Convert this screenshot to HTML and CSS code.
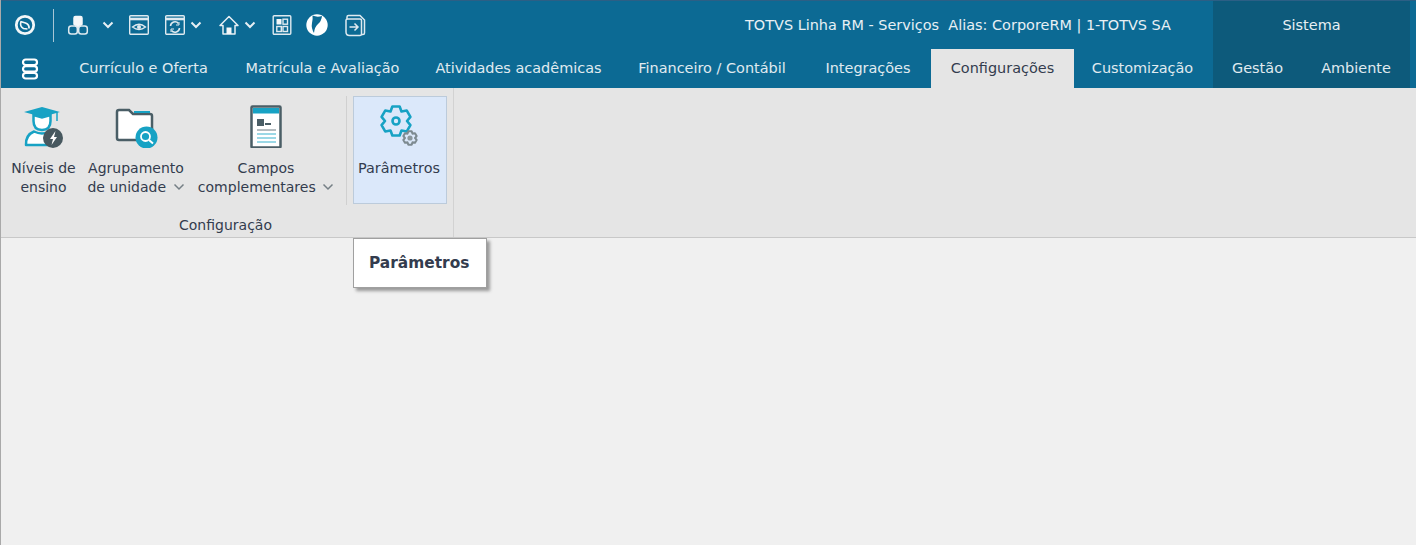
FILE: index.html
```html
<!DOCTYPE html>
<html lang="pt">
<head>
<meta charset="utf-8">
<title>TOTVS Linha RM</title>
<link rel="stylesheet" href="styles.css">
</head>
<body>
<div class="app">
  <header class="titlebar">
    <div class="quick">
      <svg class="qi" width="24" height="24" viewBox="0 0 24 24" fill="none" stroke="#f2f6f8"><circle cx="12" cy="12" r="8.700" stroke-width="2.800"/><path d="M7.500 8.500l5 1.500q4 1.500 3.500 5.500" stroke-width="1.800"/><path d="M8 8.500q-1.500 5 2.500 7l4 .5" stroke-width="1.600"/></svg>
      <span class="qsep"></span>
      <svg class="qi m12" width="24" height="24" viewBox="0 0 24 24" fill="none" stroke="#dfeaf0" stroke-width="1.500"><path d="M8 11V5q0-1.500 1.500-1.500h5Q16 3.500 16 5v6l-4 3z" fill="#f4f7f9" stroke="#f4f7f9"/><rect x="2.700" y="13" width="8.600" height="8" rx="2.500"/><rect x="12.700" y="13" width="8.600" height="8" rx="2.500"/></svg>
      <svg class="chev m12" width="12" height="8" viewBox="0 0 12 8" fill="none" stroke="#e6eff4" stroke-width="2"><path d="M1.500 1.500L6 6l4.500-4.500"/></svg>
      <svg class="qi m14" width="22" height="24" viewBox="0 0 22 24" fill="none" stroke="#dfeaf0" stroke-width="1.400"><rect x="1.700" y="2.700" width="18.600" height="18.600" rx="1"/><path d="M2 6h18" stroke-width="2.600"/><path d="M4.500 14q6.500-5.500 13 0q-6.500 5-13 0z"/><circle cx="11" cy="14" r="2" fill="#dfeaf0" stroke="none"/></svg>
      <svg class="qi m14" width="22" height="24" viewBox="0 0 22 24" fill="none" stroke="#dfeaf0" stroke-width="1.400"><rect x="1.700" y="2.700" width="18.600" height="18.600" rx="1"/><path d="M2 6h18" stroke-width="2.600"/><path d="M6.500 13a4.500 4.500 0 0 1 8-2.500M15.500 15a4.500 4.500 0 0 1-8 2.500" stroke-width="1.600"/><path d="M15 9v3h-3M7 19v-3h3" stroke-width="1"/></svg>
      <svg class="chev m4" width="12" height="8" viewBox="0 0 12 8" fill="none" stroke="#e6eff4" stroke-width="2"><path d="M1.500 1.500L6 6l4.500-4.500"/></svg>
      <svg class="qi m16" width="22" height="24" viewBox="0 0 22 24" fill="none" stroke="#e6eff4" stroke-width="1.500"><path d="M2 12.500l9-9 9 9h-3V21H5v-8.500z" stroke-linejoin="round"/><path d="M8.500 21v-6.500h5V21" fill="#f4f7f9" stroke="none"/></svg>
      <svg class="chev m4" width="12" height="8" viewBox="0 0 12 8" fill="none" stroke="#e6eff4" stroke-width="2"><path d="M1.500 1.500L6 6l4.500-4.500"/></svg>
      <svg class="qi m15" width="22" height="24" viewBox="0 0 22 24" fill="none" stroke="#dfeaf0" stroke-width="1.400"><rect x="2.200" y="2.700" width="17.600" height="18.600" rx="1"/><rect x="5.500" y="6" width="5" height="5.500" fill="#f4f7f9" stroke="none"/><rect x="12" y="6.200" width="4.500" height="5"/><rect x="5.800" y="13.500" width="4.500" height="5"/><rect x="12" y="13.500" width="4.500" height="5"/></svg>
      <svg class="qi m12" width="24" height="24" viewBox="0 0 24 24"><circle cx="12" cy="12" r="10.700" fill="#fff"/><path d="M7.500 2.500Q12 4.500 17 3Q16.500 8 13 11Q9.500 14 9 20Q6 15 7 10Q8 6 7.500 2.500z" fill="#0c6a94"/></svg>
      <svg class="qi m15" width="22" height="24" viewBox="0 0 22 24" fill="none" stroke="#dfeaf0" stroke-width="1.500"><path d="M3 6V4q0-1.500 1.500-1.500H16L20.500 7v13q0 1.500-1.500 1.500h-1" /><path d="M4 6h12q1.500 0 1.500 1.500V21q0 1.500-1.500 1.500H5.500Q2 22.500 2 19V7q0-1 2-1z" fill="#0c6a94"/><path d="M5.500 14h8.500M10.500 10.500L14 14l-3.500 3.500"/></svg>
    </div>
    <div class="title">TOTVS Linha RM - Serviços&nbsp; Alias: CorporeRM | 1-TOTVS SA</div>
    <div class="sys">Sistema</div>
    <div class="edge"></div>
  </header>
  <nav class="tabs">
    <div class="menucell"><svg width="20" height="22" viewBox="0 0 20 22" fill="none" stroke="#fff" stroke-width="2.200"><rect x="3" y="1.500" width="14" height="5.500" rx="2.700"/><rect x="3" y="8.200" width="14" height="5.500" rx="2.700"/><rect x="3" y="15" width="14" height="5.500" rx="2.700"/></svg></div>
    <span class="tab">Currículo e Oferta</span>
    <span class="tab">Matrícula e Avaliação</span>
    <span class="tab">Atividades acadêmicas</span>
    <span class="tab">Financeiro / Contábil</span>
    <span class="tab">Integrações</span>
    <span class="tab active">Configurações</span>
    <span class="tab last">Customização</span>
    <div class="systabs"><span class="tab">Gestão</span><span class="tab">Ambiente</span></div>
    <div class="edge"></div>
  </nav>
  <section class="ribbon">
    <div class="group">
      <div class="items">
        <div class="item i1">
          <svg width="40" height="44" viewBox="0 0 40 44"><path d="M0 8L18 3l18 5-18 5z" fill="#17a2c4"/><path d="M33 8v9" stroke="#17a2c4" stroke-width="1.500"/><path d="M9.500 11v6q0 9 8.500 9t8.500-9v-6l-8.500 2.500z" fill="#fff" stroke="#17a2c4" stroke-width="2.500"/><path d="M2 41q-.5-10 8-13.500 8 4 16 0 3 1 4 3-5 4-5.500 10.500z" fill="#fff" stroke="#17a2c4" stroke-width="2.500" stroke-linejoin="round"/><circle cx="29" cy="34" r="10" fill="#47585f"/><path d="M31.500 27l-5.500 8h3l-1.500 6 5.500-8h-3z" fill="#fff"/></svg>
          <span class="label">Níveis de<br>ensino</span>
        </div>
        <div class="item i2">
          <svg width="46" height="44" viewBox="0 0 46 44" fill="none"><path d="M4 34V8q0-2 2-2h10l4 4h17q2 0 2 2v22q0 2-2 2H6q-2 0-2-2z" fill="#fff" stroke="#4a5e66" stroke-width="2.500"/><path d="M21 8h16" stroke="#17a2c4" stroke-width="2"/><circle cx="33.500" cy="33.500" r="11" fill="#17a2c4"/><circle cx="32.500" cy="32.500" r="4.500" stroke="#fff" stroke-width="1.800"/><path d="M36 36l4 3.500" stroke="#fff" stroke-width="2"/></svg>
          <span class="label">Agrupamento<br>de unidade <svg class="dd" width="12" height="8" viewBox="0 0 12 8" fill="none" stroke="#757f85" stroke-width="1.500"><path d="M1.500 1.500L6 6l4.500-4.500"/></svg></span>
        </div>
        <div class="item i3">
          <svg width="32" height="44" viewBox="0 0 32 44"><rect x="1.500" y="2.500" width="29" height="41" rx="1" fill="#fff" stroke="#4a5e66" stroke-width="2.500"/><rect x="3" y="4" width="26" height="5.500" fill="#17a2c4"/><rect x="7" y="15" width="7" height="7" fill="#4a5e66"/><rect x="15" y="19" width="6" height="2" fill="#4a5e66"/><rect x="7" y="25" width="19" height="2" fill="#b4bcc0"/><rect x="7" y="29" width="19" height="2" fill="#9bd8e6"/><rect x="7" y="33" width="19" height="2" fill="#9bd8e6"/><rect x="7" y="37" width="19" height="2" fill="#9bd8e6"/></svg>
          <span class="label">Campos<br>complementares <svg class="dd" width="12" height="8" viewBox="0 0 12 8" fill="none" stroke="#757f85" stroke-width="1.500"><path d="M1.500 1.500L6 6l4.500-4.500"/></svg></span>
        </div>
        <span class="gsep"></span>
        <div class="item hot">
          <svg width="44" height="44" viewBox="0 0 44 44" fill="none"><path d="M12.500 8.500L14.370 3.450L21.630 3.450L23.500 8.500L28.790 7.580L32.420 13.870L29 18L32.420 22.130L28.790 28.420L23.500 27.500L21.630 32.550L14.370 32.550L12.500 27.500L7.210 28.420L3.580 22.130L7 18L3.580 13.870L7.210 7.580Z" stroke="#17a2c4" stroke-width="2.600" stroke-linejoin="round"/><circle cx="18" cy="18" r="3.500" stroke="#17a2c4" stroke-width="2.600"/><path d="M12.500 8.500L14.370 3.450L21.630 3.450L23.500 8.500L28.790 7.580L32.420 13.870L29 18L32.420 22.130L28.790 28.420L23.500 27.500L21.630 32.550L14.370 32.550L12.500 27.500L7.210 28.420L3.580 22.130L7 18L3.580 13.870L7.210 7.580Z" transform="translate(23.720 26.720) scale(.46)" stroke="#7d8a90" stroke-width="4.500" stroke-linejoin="round" fill="#dbe8fa"/><circle cx="32" cy="35" r="2.600" fill="#8b979c"/></svg>
          <span class="label">Parâmetros</span>
        </div>
      </div>
      <div class="gname">Configuração</div>
    </div>
  </section>
  <main class="content">
    <div class="tip">Parâmetros</div>
  </main>
</div>
</body>
</html>
```
FILE: styles.css
```css
* { box-sizing: border-box; }
html, body { margin: 0; height: 100%; overflow: hidden; }
body { font-family: "DejaVu Sans", sans-serif; font-size: 14px; color: #333c4e; background: #f0f0f0; }
.app { width: 1416px; height: 545px; display: flex; flex-direction: column; border-left: 1px solid #a9a9a9; }
.titlebar { height: 49px; flex: none; display: flex; align-items: stretch; background: #0c6a94; border-top: 1px solid #2c5f85; color: #e8f0f4; font-size: 14.45px; }
.quick { display: flex; align-items: center; width: 744px; padding-left: 12px; }
.qi, .chev { flex: none; display: block; }
.qsep { width: 1px; height: 33px; background: #a8c6d5; margin-left: 16px; }
.m4 { margin-left: 4px; }
.m12 { margin-left: 12px; }
.m14 { margin-left: 14px; }
.m15 { margin-left: 15px; }
.m16 { margin-left: 16px; }
.title { flex: 1; line-height: 48px; white-space: nowrap; }
.sys { width: 197px; flex: none; background: #0d5a7b; text-align: center; line-height: 48px; }
.edge { width: 6px; flex: none; }
.tabs { height: 39px; flex: none; display: grid; grid-template-columns: 59px 167px 191px 201px 186px 126px 143px 139px 197px 6px; background: #0c6a94; color: #e0ebf0; font-size: 14.45px; }
.menucell { display: flex; align-items: center; padding-left: 19px; }
.tab { line-height: 39px; white-space: nowrap; text-align: center; }
.tab.last { padding-right: 2px; }
.tab.active { background: #e5e5e5; color: #333c4e; }
.systabs { display: grid; grid-template-columns: 89px 108px; background: #0d5a7b; }
.ribbon { height: 150px; flex: none; display: flex; background: #e5e5e5; border-bottom: 1px solid #c8c8c8; }
.group { width: 453px; flex: none; display: flex; flex-direction: column; border-right: 1px solid #d2d2d2; }
.items { display: flex; height: 116px; padding-top: 8px; }
.item { display: flex; flex-direction: column; align-items: center; text-align: center; line-height: 19px; white-space: nowrap; }
.item > svg { margin-top: 8px; }
.label { margin-top: 11px; }
.i1 { width: 85px; }
.i2 { width: 100px; }
.i3 { width: 160px; }
.dd { margin-left: 2px; vertical-align: 1px; }
.gsep { width: 1px; height: 109px; background: #d0d0d0; margin-right: 6px; }
.hot { width: 94px; height: 108px; background: #dbe8fa; border: 1px solid #bccbdb; }
.hot > svg { margin-top: 6px; }
.hot .label { margin-top: 12px; margin-right: 2px; font-size: 14.4px; }
.gname { margin-top: 12px; padding-right: 3px; text-align: center; line-height: 19px; }
.content { flex: 1; position: relative; background: #f0f0f0; }
.tip { position: absolute; left: 352px; top: 0; width: 134px; height: 50px; background: #fff; border: 1px solid #a0a0a0; box-shadow: 3px 3px 3px #9a9a9a; font-weight: bold; font-size: 15.4px; line-height: 49px; padding-left: 15px; }
```
